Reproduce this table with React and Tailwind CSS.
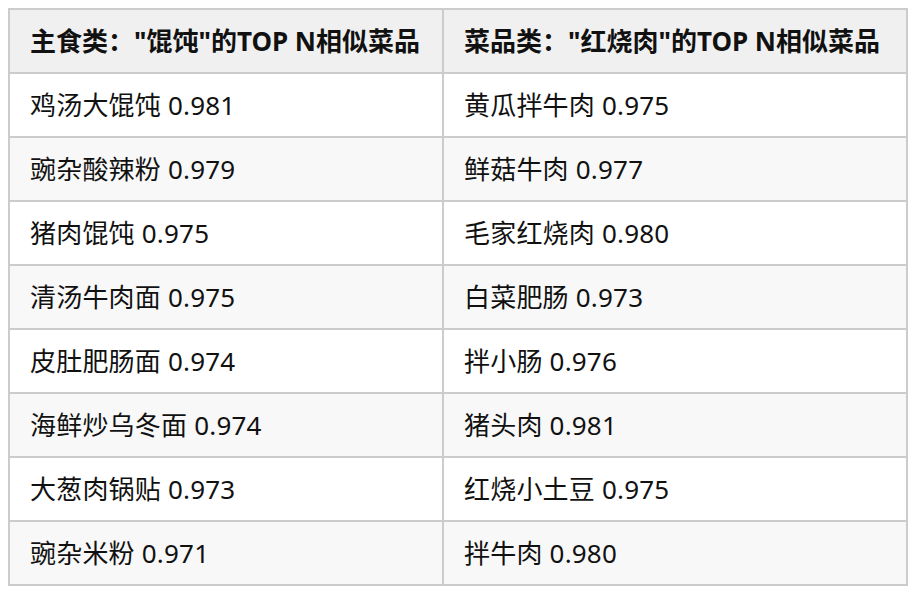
const left = [
  "鸡汤大馄饨 0.981",
  "豌杂酸辣粉 0.979",
  "猪肉馄饨 0.975",
  "清汤牛肉面 0.975",
  "皮肚肥肠面 0.974",
  "海鲜炒乌冬面 0.974",
  "大葱肉锅贴 0.973",
  "豌杂米粉 0.971",
];
const right = [
  "黄瓜拌牛肉 0.975",
  "鲜菇牛肉 0.977",
  "毛家红烧肉 0.980",
  "白菜肥肠 0.973",
  "拌小肠 0.976",
  "猪头肉 0.981",
  "红烧小土豆 0.975",
  "拌牛肉 0.980",
];

export default function App() {
  return (
    <div className="w-[912px] h-[596px] bg-white pt-[8px] pl-[8px] font-['Noto_Sans','Noto_Sans_CJK_SC',sans-serif] text-[#111]">
      <table className="border-collapse w-[898px] table-fixed">
        <colgroup>
          <col className="w-[434px]" />
          <col className="w-[464px]" />
        </colgroup>
        <thead>
          <tr className="bg-[#f0f0f0] h-[64px]">
            <th className="border-2 border-[#cccccc] text-left font-bold text-[26px] pl-[20px] whitespace-nowrap">主食类："馄饨"的TOP N相似菜品</th>
            <th className="border-2 border-[#cccccc] text-left font-bold text-[26px] pl-[20px] whitespace-nowrap">菜品类："红烧肉"的TOP N相似菜品</th>
          </tr>
        </thead>
        <tbody>
          {left.map((l, i) => (
            <tr key={i} className={(i % 2 === 1 ? "bg-[#f8f8f8]" : "bg-white") + " h-[64px]"}>
              <td className="border-2 border-[#cccccc] text-[26px] pl-[20px] tracking-[0.2px]">{l}</td>
              <td className="border-2 border-[#cccccc] text-[26px] pl-[20px] tracking-[0.2px]">{right[i]}</td>
            </tr>
          ))}
        </tbody>
      </table>
    </div>
  );
}
